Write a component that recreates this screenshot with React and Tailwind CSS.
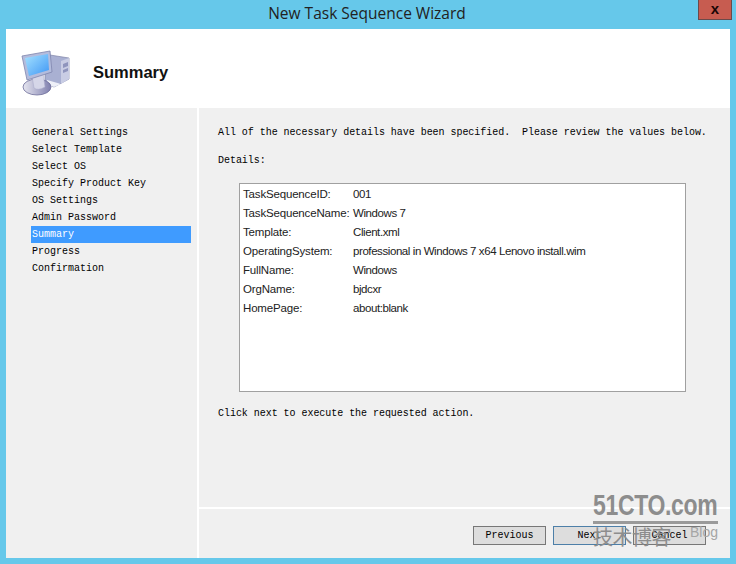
const steps = [
  'General Settings',
  'Select Template',
  'Select OS',
  'Specify Product Key',
  'OS Settings',
  'Admin Password',
  'Summary',
  'Progress',
  'Confirmation',
];

const details = [
  ['TaskSequenceID:', '001'],
  ['TaskSequenceName:', 'Windows 7'],
  ['Template:', 'Client.xml'],
  ['OperatingSystem:', 'professional in Windows 7 x64 Lenovo install.wim'],
  ['FullName:', 'Windows'],
  ['OrgName:', 'bjdcxr'],
  ['HomePage:', 'about:blank'],
];

function ComputerIcon() {
  return (
    <svg width="52" height="50" viewBox="0 0 52 50" className="shrink-0">
      <defs>
        <linearGradient id="screen" x1="0" y1="0" x2="1" y2="1">
          <stop offset="0" stopColor="#a6e2ff" />
          <stop offset="1" stopColor="#3f97f5" />
        </linearGradient>
        <linearGradient id="base" x1="0" y1="0" x2="1" y2="0">
          <stop offset="0" stopColor="#e6e6f0" />
          <stop offset="1" stopColor="#7f7fae" />
        </linearGradient>
      </defs>
      <path d="M30 7 L49 10 L49 31 L34 39 L25 35 L25 8 Z" fill="#a9b0d2" stroke="#7f84a8" strokeWidth="0.7" />
      <path d="M41 13 L49 10 L49 31 L41 36 Z" fill="#c9cde4" />
      <path d="M43 16 L48 14 L48 18 L43 20 Z" fill="#8f95bd" />
      <path d="M43 22 L48 20 L48 23 L43 25 Z" fill="#8f95bd" />
      <path d="M27 32 L41 36 L34 39 L27 36 Z" fill="#eef0f8" />
      <ellipse cx="17" cy="39" rx="14" ry="8" fill="url(#base)" stroke="#6f6f9a" strokeWidth="0.8" />
      <path d="M12 28 L23 25 L25 39 Q18 43 14 40 Z" fill="#d5d6e8" stroke="#a7a8c8" strokeWidth="0.5" />
      <path d="M2 8 L30 3 L32 24 L7 32 Z" fill="#b4bcdc" stroke="#7f85ad" strokeWidth="0.8" />
      <path d="M5 10 L28 6 L29 22 L9 28 Z" fill="url(#screen)" />
    </svg>
  );
}

function WizardButton({ label, primary }) {
  return (
    <button className={`h-[19px] w-[73px] border bg-[#dddddd] text-[10px] text-black ${primary ? 'border-[#4d7fa8]' : 'border-[#777777]'}`}>
      {label}
    </button>
  );
}

export default function App() {
  return (
    <div className="relative h-[564px] w-[736px] overflow-hidden bg-[#66c8ea] font-['Liberation_Mono',monospace] text-[10px] text-black">
      {/* title bar */}
      <div className="flex h-[29px] items-start justify-between">
        <div className="w-[30px]" />
        <div className="pl-[6px] pt-[3px] font-['Open_Sans',sans-serif] text-[15.5px] leading-[20px] text-[#222222]">New Task Sequence Wizard</div>
        <div className="mr-[4px] flex h-[20px] w-[34px] items-center justify-center border border-t-0 border-[#6b4a4a] bg-[#c75c50] pb-[2px]">
          <span className="font-['Liberation_Sans',sans-serif] text-[15px] font-bold leading-none text-[#1a0505]">x</span>
        </div>
      </div>

      <div className="mx-[6px] flex h-[529px] w-[724px] flex-col bg-[#f0f0f0]">
        {/* header */}
        <div className="flex h-[79px] items-center bg-white pl-[14px] pt-[8px]">
          <ComputerIcon />
          <div className="ml-[21px] font-['Liberation_Sans',sans-serif] text-[16.5px] font-bold text-[#111111]">Summary</div>
        </div>

        <div className="flex flex-1">
          {/* steps */}
          <div className="w-[191px] pl-[25px] pr-[6px] pt-[16px]">
            {steps.map((step) => (
              <div
                key={step}
                className={`h-[17px] pl-[1px] leading-[17px] ${step === 'Summary' ? 'bg-[#3f9bff] text-white' : ''}`}
              >
                {step}
              </div>
            ))}
          </div>

          {/* content */}
          <div className="flex flex-1 flex-col border-l-2 border-white">
            <div className="h-[399px] pl-[19px] pt-[19px] tracking-[-0.04px]">
              <div className="whitespace-pre leading-[12px]">All of the necessary details have been specified.  Please review the values below.</div>
              <div className="mt-[16px] leading-[12px]">Details:</div>
              <div className="ml-[21px] mt-[16px] h-[209px] w-[447px] border border-[#a0a0a0] bg-white pl-[3px] pt-[1px] font-['Liberation_Sans',sans-serif] text-[11.5px] text-[#222222]">
                {details.map(([name, value]) => (
                  <div key={name} className="flex h-[19px] items-center">
                    <div className="w-[110px] tracking-[-0.17px]">{name}</div>
                    <div className="tracking-[-0.42px]">{value}</div>
                  </div>
                ))}
              </div>
              <div className="mt-[16px] leading-[12px]">Click next to execute the requested action.</div>
            </div>
            <div className="flex flex-1 justify-end gap-[7px] border-t-2 border-white pr-[24px] pt-[17px]">
              <WizardButton label="Previous" />
              <WizardButton label="Next" primary />
              <WizardButton label="Cancel" />
            </div>
          </div>
        </div>
      </div>

      {/* watermark */}
      <div className="absolute left-[593px] top-[490px] w-[125px] text-[#8d8d8d]">
        <div className="border-b-[3px] border-[#9a9a9a]">
          <div className="origin-bottom translate-y-[4px] scale-y-[1.3] whitespace-nowrap font-['Liberation_Sans',sans-serif] text-[23px] font-bold leading-[31px] tracking-[-0.35px]">51CTO.com</div>
        </div>
        <div className="flex items-start justify-between">
          <span className="font-['Noto_Sans_CJK_SC',sans-serif] text-[20px] leading-[26px] tracking-[-0.5px]">技术博客</span>
          <span className="-mt-[2px] font-['Liberation_Sans',sans-serif] text-[14px] leading-[20px] text-[#a5a5a5]">Blog</span>
        </div>
      </div>
    </div>
  );
}
